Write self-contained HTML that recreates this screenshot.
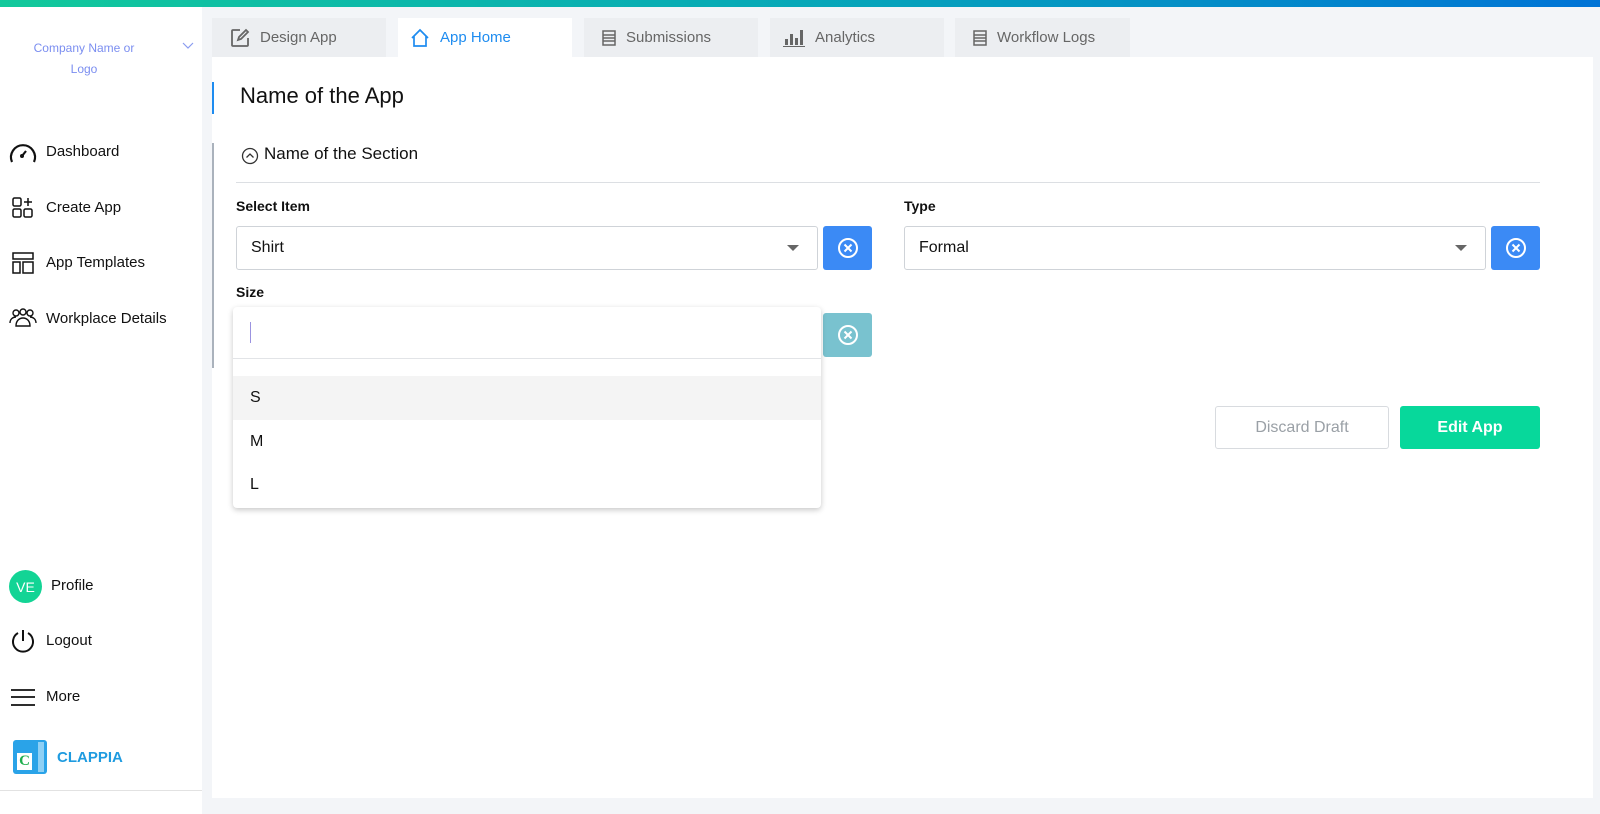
<!DOCTYPE html>
<html><head><meta charset="utf-8"><style>
*{box-sizing:border-box;margin:0;padding:0}
body{width:1600px;height:814px;overflow:hidden;background:#f3f5f8;font-family:"Liberation Sans",sans-serif;position:relative;color:#111}
.bar{position:absolute;left:0;top:0;width:1600px;height:7px;background:linear-gradient(90deg,#12c99b,#07a8b8 50%,#0073d6)}
.side{position:absolute;left:0;top:7px;width:202px;height:807px;background:#fff}
.abs{position:absolute}
.nav{position:absolute;left:46px;font-size:15px;color:#111}
.tab{position:absolute;top:18px;height:39px;background:#eceef1;color:#666;font-size:15px;display:flex;align-items:center}
.tab svg{margin-right:10px}
.panel{position:absolute;left:212px;top:57px;width:1381px;height:741px;background:#fff}
.lbl{position:absolute;font-size:14px;font-weight:bold;color:#111}
.sel{position:absolute;height:44px;border:1px solid #cfd3d8;border-radius:3px;background:#fff;font-size:16px;padding:0 14px;display:flex;align-items:center}
.sel:after{content:"";position:absolute;right:18px;top:18px;border:6px solid transparent;border-top:6px solid #666}
.xb{position:absolute;width:49px;height:44px;border-radius:3px;background:#3b8af5;display:flex;align-items:center;justify-content:center}
</style></head><body>
<div class="bar"></div>
<div class="side">
  <div class="abs" style="left:28px;top:31px;font-size:12px;color:#7b8ef0;text-align:center;width:112px;line-height:21px">Company Name or<br>Logo</div>
  <svg class="abs" style="left:182px;top:35px" width="12" height="8"><path d="M1 1l5 5 5-5" fill="none" stroke="#8a9cf0" stroke-width="1.2"/></svg>
</div>
<svg class="abs" style="left:8px;top:141px" width="30" height="22" viewBox="0 0 30 22"><path d="M4 21A12 12 0 1 1 26 21" fill="none" stroke="#111" stroke-width="2.2"/><path d="M14 15l4-5" stroke="#111" stroke-width="2.2"/><circle cx="14" cy="15" r="2" fill="#111"/></svg>
<div class="nav" style="top:143px">Dashboard</div>
<svg class="abs" style="left:12px;top:197px" width="22" height="22" viewBox="0 0 22 22" fill="none" stroke="#111" stroke-width="1.5"><rect x="1" y="1" width="8" height="8" rx="1.5"/><rect x="1" y="12" width="8" height="8" rx="1.5"/><rect x="12" y="12" width="8" height="8" rx="1.5"/><path d="M16 1v8M12 5h8"/></svg>
<div class="nav" style="top:199px">Create App</div>
<svg class="abs" style="left:12px;top:252px" width="22" height="22" viewBox="0 0 22 22" fill="none" stroke="#111" stroke-width="1.5"><rect x="1" y="1" width="20" height="6"/><rect x="1" y="10" width="7" height="11"/><rect x="11" y="10" width="10" height="11"/></svg>
<div class="nav" style="top:254px">App Templates</div>
<svg class="abs" style="left:9px;top:308px" width="28" height="20" viewBox="0 0 28 20" fill="none" stroke="#111" stroke-width="1.4"><circle cx="7" cy="5" r="3"/><circle cx="14" cy="4" r="3"/><circle cx="21" cy="5" r="3"/><path d="M1 15c0-4 3-6 6-6M27 15c0-4-3-6-6-6M7 18c0-5 3-8 7-8s7 3 7 8z"/></svg>
<div class="nav" style="top:310px">Workplace Details</div>
<div class="abs" style="left:9px;top:570px;width:33px;height:33px;border-radius:50%;background:#13d495;color:#fff;font-size:14px;display:flex;align-items:center;justify-content:center">VE</div>
<div class="nav" style="top:577px;left:51px">Profile</div>
<svg class="abs" style="left:10px;top:628px" width="26" height="26" viewBox="0 0 26 26" fill="none" stroke="#111" stroke-width="2"><path d="M8 5A10 10 0 1 0 18 5"/><path d="M13 2v11"/></svg>
<div class="nav" style="top:632px">Logout</div>
<svg class="abs" style="left:10px;top:688px" width="26" height="20"><path d="M1 2h24M1 9h24M1 17h24" stroke="#111" stroke-width="1.8"/></svg>
<div class="nav" style="top:688px">More</div>
<div class="abs" style="left:13px;top:740px;width:34px;height:34px;border-radius:3px;background:#2aa3e8"><div style="position:absolute;left:4px;top:13px;width:15px;height:17px;background:#fff;color:#1fae4e;font-weight:bold;font-size:15px;text-align:center;line-height:17px;font-family:'Liberation Serif',serif">C</div><div style="position:absolute;right:3px;top:2px;width:6px;height:30px;background:#8ed0f5"></div></div>
<div class="abs" style="left:57px;top:749px;font-size:15px;font-weight:bold;color:#1e9be0">CLAPPIA</div>
<div class="abs" style="left:0;top:790px;width:202px;height:1px;background:#e2e2e2"></div>

<div class="tab" style="left:212px;width:174px;padding-left:18px"><svg width="20" height="20" viewBox="0 0 20 20" fill="none" stroke="#666" stroke-width="1.8"><path d="M10 2H3a1 1 0 0 0-1 1v14a1 1 0 0 0 1 1h14a1 1 0 0 0 1-1V10"/><path d="M8 12l1-3 7-7 2 2-7 7z"/></svg>Design App</div>
<div class="tab" style="left:398px;width:174px;padding-left:12px;background:#fff;color:#1e8cf0"><svg width="20" height="20" viewBox="0 0 20 20" fill="none" stroke="#1e8cf0" stroke-width="1.7"><path d="M2 10L10 2l8 8M4 8v10h12V8"/></svg>App Home</div>
<div class="tab" style="left:584px;width:174px;padding-left:18px"><svg width="14" height="16" viewBox="0 0 14 16" fill="none" stroke="#666" stroke-width="1.5"><rect x="1" y="1" width="12" height="14"/><path d="M1 5h12M1 8h12M1 11h12"/></svg>Submissions</div>
<div class="tab" style="left:770px;width:174px;padding-left:13px"><svg width="22" height="18" viewBox="0 0 22 18" fill="#666"><rect x="2" y="10" width="3" height="6"/><rect x="7" y="5" width="3" height="11"/><rect x="12" y="9" width="3" height="7"/><rect x="17" y="1" width="3" height="15"/><rect x="0" y="17" width="22" height="1.5"/></svg>Analytics</div>
<div class="tab" style="left:955px;width:175px;padding-left:18px"><svg width="14" height="16" viewBox="0 0 14 16" fill="none" stroke="#666" stroke-width="1.5"><rect x="1" y="1" width="12" height="14"/><path d="M1 5h12M1 8h12M1 11h12"/></svg>Workflow Logs</div>

<div class="panel"></div>
<div class="abs" style="left:212px;top:82px;width:2px;height:32px;background:#1e8cf0"></div>
<div class="abs" style="left:212px;top:143px;width:2px;height:225px;background:#aab2bc"></div>
<div class="abs" style="left:240px;top:83px;font-size:22px;color:#111">Name of the App</div>
<svg class="abs" style="left:241px;top:147px" width="18" height="18" viewBox="0 0 18 18" fill="none" stroke="#333" stroke-width="1.3"><circle cx="9" cy="9" r="7.5"/><path d="M5.5 10.5L9 7l3.5 3.5"/></svg>
<div class="abs" style="left:264px;top:144px;font-size:17px;color:#111">Name of the Section</div>
<div class="abs" style="left:236px;top:182px;width:1304px;height:1px;background:#dcdfe3"></div>

<div class="lbl" style="left:236px;top:198px">Select Item</div>
<div class="sel" style="left:236px;top:226px;width:582px">Shirt</div>
<div class="xb" style="left:823px;top:226px"><svg width="22" height="22" viewBox="0 0 22 22" fill="none" stroke="#fff" stroke-width="2"><circle cx="11" cy="11" r="9"/><path d="M7.5 7.5l7 7M14.5 7.5l-7 7"/></svg></div>
<div class="lbl" style="left:904px;top:198px">Type</div>
<div class="sel" style="left:904px;top:226px;width:582px">Formal</div>
<div class="xb" style="left:1491px;top:226px"><svg width="22" height="22" viewBox="0 0 22 22" fill="none" stroke="#fff" stroke-width="2"><circle cx="11" cy="11" r="9"/><path d="M7.5 7.5l7 7M14.5 7.5l-7 7"/></svg></div>
<div class="lbl" style="left:236px;top:284px">Size</div>
<div class="xb" style="left:823px;top:313px;background:#79c2cf"><svg width="22" height="22" viewBox="0 0 22 22" fill="none" stroke="#fff" stroke-width="2"><circle cx="11" cy="11" r="9"/><path d="M7.5 7.5l7 7M14.5 7.5l-7 7"/></svg></div>

<div class="abs" style="left:233px;top:307px;width:588px;height:201px;background:#fff;border-radius:4px;box-shadow:0 2px 6px rgba(0,0,0,.22)">
  <div class="abs" style="left:17px;top:15px;width:1px;height:21px;background:#9b93e0"></div>
  <div class="abs" style="left:0;top:51px;width:588px;height:1px;background:#e2e4e7"></div>
  <div class="abs" style="left:0;top:69px;width:588px;height:44px;background:#f4f4f4"></div>
  <div class="abs" style="left:17px;top:82px;font-size:16px">S</div>
  <div class="abs" style="left:17px;top:126px;font-size:16px">M</div>
  <div class="abs" style="left:17px;top:169px;font-size:16px">L</div>
</div>

<div class="abs" style="left:1215px;top:406px;width:174px;height:43px;border:1px solid #d8dbdf;border-radius:3px;color:#9aa0a6;font-size:16px;display:flex;align-items:center;justify-content:center">Discard Draft</div>
<div class="abs" style="left:1400px;top:406px;width:140px;height:43px;border-radius:3px;background:#07d89b;color:#fff;font-size:16px;font-weight:bold;display:flex;align-items:center;justify-content:center">Edit App</div>
</body></html>
